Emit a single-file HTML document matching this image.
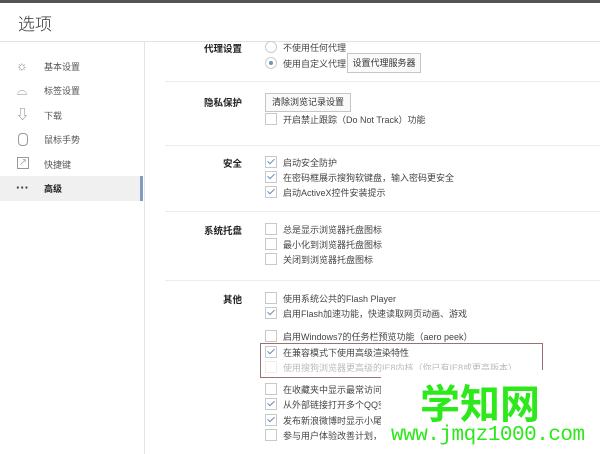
<!DOCTYPE html><html><head><meta charset="utf-8"><style>
body{margin:0;width:600px;height:454px;overflow:hidden;background:#fff;font-family:"Liberation Sans","Noto Sans CJK SC",sans-serif;font-size:9px;color:#333;position:relative}
.a{position:absolute;white-space:nowrap}
.lab{position:absolute;right:358px;font-weight:bold;color:#222;font-size:9.5px}
.cb{position:absolute;left:265px;width:10px;height:10px;border:1px solid #c8c8c8;background:#fff}
.cb.k::after{content:"";position:absolute;left:3px;top:0px;width:3px;height:6px;border:solid #6a8fb5;border-width:0 1.5px 1.5px 0;transform:rotate(45deg)}
.t{position:absolute;left:283px;color:#444}
.hr{position:absolute;left:165px;right:0;height:1px;background:#ececec}
.btn{position:absolute;border:1px solid #c6c6c6;background:#fafafa;color:#333;text-align:center}
.si{position:absolute;left:44px;color:#555}
.ic{position:absolute;left:16px;width:12px;text-align:center;color:#888;font-size:13px;line-height:14px}
</style></head><body>
<div class="a" style="left:0;top:0;width:600px;height:3px;background:#555"></div>
<div class="a" style="left:18px;top:10px;font-size:17px;color:#333;font-family:'Noto Sans CJK SC',sans-serif;font-weight:300">选项</div>
<div class="a" style="left:0;top:41px;width:600px;height:1px;background:#e2e2e2"></div>
<div class="a" style="left:144px;top:42px;width:1px;height:412px;background:#e4e4e4"></div>
<div class="a" style="left:0;top:176px;width:141px;height:25px;background:#f0f0f0"></div>
<div class="a" style="left:140px;top:176px;width:3px;height:25px;background:#7f9cc0"></div>
<div class="ic" style="top:59px">☼</div><div class="si" style="top:60px">基本设置</div>
<div class="ic" style="top:84px">⌓</div><div class="si" style="top:84px">标签设置</div>
<div class="ic" style="top:108px">⇩</div><div class="si" style="top:109px">下载</div>
<div class="a" style="left:18px;top:133px;width:8px;height:11px;border:1px solid #999;border-radius:4px"></div><div class="si" style="top:133px">鼠标手势</div>
<div class="a" style="left:17px;top:157px;width:10px;height:10px;border:1px solid #999;font-size:8px;line-height:10px;text-align:center;color:#888">↗</div><div class="si" style="top:158px">快捷键</div>
<div class="ic" style="top:181px;color:#333;font-weight:bold">···</div><div class="si" style="top:182px;color:#222;font-weight:bold">高级</div>

<div class="lab" style="top:41px">代理设置</div>
<div class="a" style="left:265px;top:41px;width:10px;height:10px;border:1px solid #ccc;border-radius:50%"></div>
<div class="t" style="top:41px">不使用任何代理</div>
<div class="a" style="left:265px;top:57px;width:10px;height:10px;border:1px solid #ccc;border-radius:50%"></div>
<div class="a" style="left:269px;top:61px;width:4px;height:4px;background:#6a95c5;border-radius:50%"></div>
<div class="t" style="top:57px">使用自定义代理</div>
<div class="btn" style="left:347px;top:53px;width:72px;height:18px;line-height:18px">设置代理服务器</div>
<div class="hr" style="top:81px"></div>

<div class="lab" style="top:95px">隐私保护</div>
<div class="btn" style="left:265px;top:93px;width:84px;height:17px;line-height:17px">清除浏览记录设置</div>
<div class="cb" style="top:113px"></div><div class="t" style="top:113px">开启禁止跟踪（Do Not Track）功能</div>
<div class="hr" style="top:145px"></div>

<div class="lab" style="top:156px">安全</div>
<div class="cb k" style="top:156px"></div><div class="t" style="top:156px">启动安全防护</div>
<div class="cb k" style="top:171px"></div><div class="t" style="top:171px">在密码框展示搜狗软键盘，输入密码更安全</div>
<div class="cb k" style="top:186px"></div><div class="t" style="top:186px">启动ActiveX控件安装提示</div>
<div class="hr" style="top:211px"></div>

<div class="lab" style="top:223px">系统托盘</div>
<div class="cb" style="top:223px"></div><div class="t" style="top:223px">总是显示浏览器托盘图标</div>
<div class="cb" style="top:238px"></div><div class="t" style="top:238px">最小化到浏览器托盘图标</div>
<div class="cb" style="top:253px"></div><div class="t" style="top:253px">关闭到浏览器托盘图标</div>
<div class="hr" style="top:280px"></div>

<div class="lab" style="top:292px">其他</div>
<div class="cb" style="top:292px"></div><div class="t" style="top:292px">使用系统公共的Flash Player</div>
<div class="cb k" style="top:307px"></div><div class="t" style="top:307px">启用Flash加速功能，快速读取网页动画、游戏</div>
<div class="cb" style="top:330px"></div><div class="t" style="top:330px">启用Windows7的任务栏预览功能（aero peek）</div>
<div class="a" style="left:260px;top:343px;width:281px;height:33px;border:1px solid #9a7070"></div>
<div class="cb k" style="top:346px"></div><div class="t" style="top:346px">在兼容模式下使用高级渲染特性</div>
<div class="cb" style="top:361px;border-color:#eee"></div><div class="t" style="top:361px;color:#bbb">使用搜狗浏览器更高级的IE8内核（你已有IE8或更高版本）</div>
<div class="cb" style="top:383px"></div><div class="t" style="top:383px">在收藏夹中显示最常访问的</div>
<div class="cb k" style="top:398px"></div><div class="t" style="top:398px">从外部链接打开多个QQ空间</div>
<div class="cb k" style="top:414px"></div><div class="t" style="top:414px">发布新浪微博时显示小尾巴</div>
<div class="cb" style="top:429px"></div><div class="t" style="top:429px">参与用户体验改善计划，帮</div>

<div class="a" style="left:381px;top:370px;width:219px;height:79px;background:#fff"></div>
<div class="a" style="left:420px;top:376px;font-size:40px;font-weight:bold;color:#2de81a;font-family:'Noto Sans CJK SC',sans-serif;line-height:50px">学知网</div>
<div class="a" style="left:391px;top:425px;font-size:21px;color:#2de81a;font-family:'Liberation Mono',monospace;line-height:22px;letter-spacing:-0.5px">www.jmqz1000.com</div>
</body></html>
